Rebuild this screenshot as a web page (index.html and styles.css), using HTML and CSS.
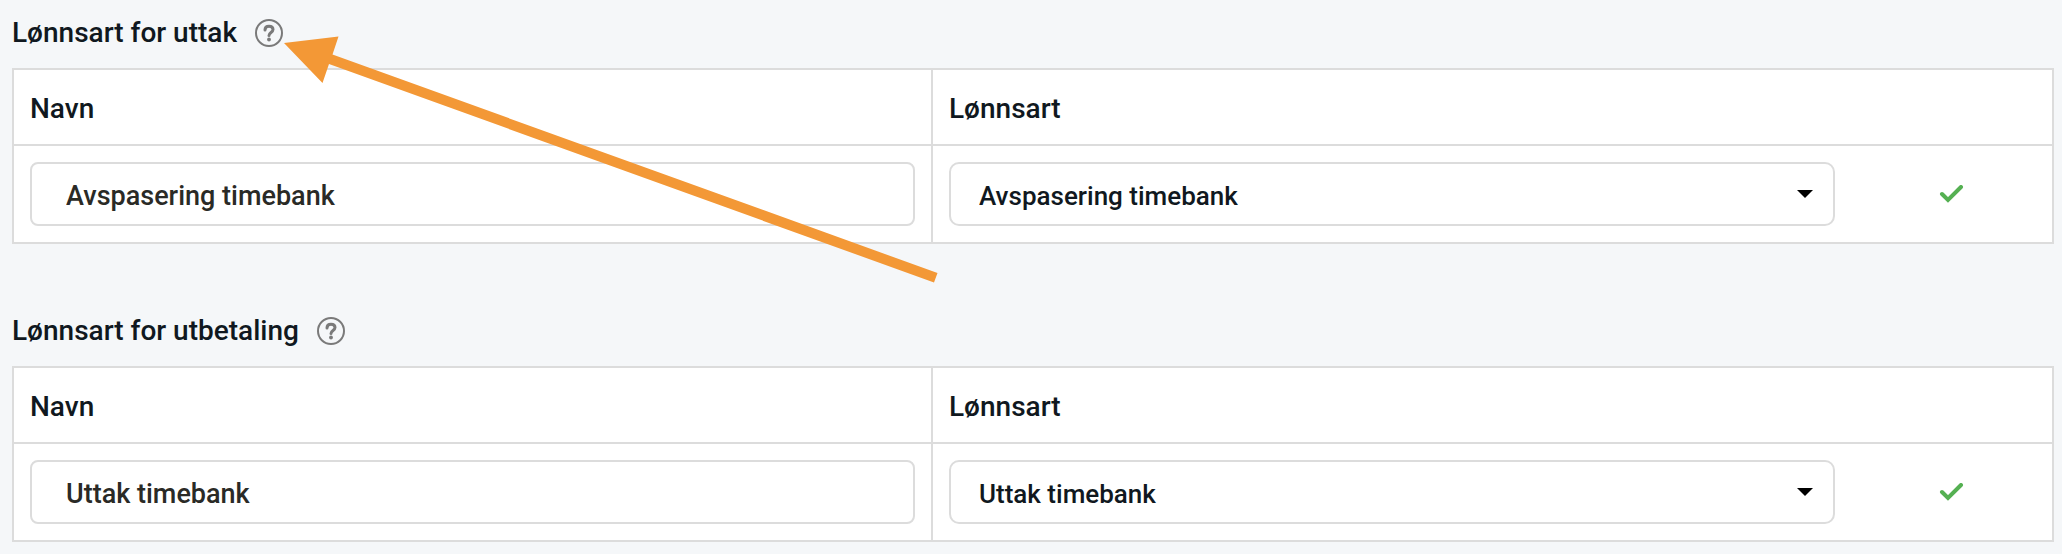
FILE: index.html
```html
<!DOCTYPE html>
<html lang="no">
<head>
    <meta charset="UTF-8">
    <meta name="viewport" content="width=device-width, initial-scale=1.0">
    <title>Timebank</title>
    <link rel="stylesheet" href="styles.css">
</head>
<body>
    <section>
        <div class="heading">
            <h2>Lønnsart for uttak</h2>
            <button type="button" class="help" aria-label="Hjelp">
                <svg width="28" height="28" viewBox="0 0 28 28">
                    <circle cx="14" cy="14" r="13"/>
                    <path d="M10 11C10 8.600 11.700 7.200 14 7.200C16.300 7.200 18 8.500 18 10.600C18 13.500 14 13.500 14 16.500"/>
                    <circle class="dot" cx="14" cy="20.500" r="1.900"/>
                </svg>
            </button>
        </div>
        <table>
            <thead>
                <tr>
                    <th>Navn</th>
                    <th>Lønnsart</th>
                    <th class="status"></th>
                </tr>
            </thead>
            <tbody>
                <tr>
                    <td><input type="text" aria-label="Navn" value="Avspasering timebank"></td>
                    <td>
                        <div class="select">
                            <select aria-label="Lønnsart">
                                <option>Avspasering timebank</option>
                                <option>Uttak timebank</option>
                            </select>
                            <svg class="caret" width="16" height="8" viewBox="0 0 16 8"><path d="M0 0H16L8 8Z"/></svg>
                        </div>
                    </td>
                    <td class="status">
                        <svg class="check" width="26" height="18" viewBox="0 0 26 18"><path d="M3 9L9 15L22 2"/></svg>
                    </td>
                </tr>
            </tbody>
        </table>
    </section>

    <section>
        <div class="heading">
            <h2>Lønnsart for utbetaling</h2>
            <button type="button" class="help" aria-label="Hjelp">
                <svg width="28" height="28" viewBox="0 0 28 28">
                    <circle cx="14" cy="14" r="13"/>
                    <path d="M10 11C10 8.600 11.700 7.200 14 7.200C16.300 7.200 18 8.500 18 10.600C18 13.500 14 13.500 14 16.500"/>
                    <circle class="dot" cx="14" cy="20.500" r="1.900"/>
                </svg>
            </button>
        </div>
        <table>
            <thead>
                <tr>
                    <th>Navn</th>
                    <th>Lønnsart</th>
                    <th class="status"></th>
                </tr>
            </thead>
            <tbody>
                <tr>
                    <td><input type="text" aria-label="Navn" value="Uttak timebank"></td>
                    <td>
                        <div class="select">
                            <select aria-label="Lønnsart">
                                <option>Uttak timebank</option>
                                <option>Avspasering timebank</option>
                            </select>
                            <svg class="caret" width="16" height="8" viewBox="0 0 16 8"><path d="M0 0H16L8 8Z"/></svg>
                        </div>
                    </td>
                    <td class="status">
                        <svg class="check" width="26" height="18" viewBox="0 0 26 18"><path d="M3 9L9 15L22 2"/></svg>
                    </td>
                </tr>
            </tbody>
        </table>
    </section>

    <!-- arrow pointing at the first help icon -->
    <svg class="arrow" width="656" height="248" viewBox="0 0 656 248">
        <path d="M0 7L54.500 0.500L48.500 18.500L653.500 237L650 246.500L45 28L38.500 47Z"/>
    </svg>
</body>
</html>
```

FILE: styles.css
```css
* {
    box-sizing: border-box;
}

body {
    position: relative;
    margin: 0;
    padding: 12px 8px 12px 12px;
    background-color: #f5f7f9;
    color: #101820;
    font-family: Roboto, Arial, sans-serif;
    font-size: 28px;
    font-weight: 500;
    line-height: 42px;
}

section + section {
    margin-top: 66px;
}

.heading {
    display: flex;
    align-items: center;
    gap: 18px;
    margin-bottom: 14px;
}

h2 {
    margin: 0;
    font-size: 28px;
    font-weight: 500;
}

.help {
    display: flex;
    padding: 0;
    border: none;
    background: none;
    cursor: pointer;
}

.help svg {
    fill: none;
    stroke: #7a7a7a;
    stroke-width: 2;
    stroke-linecap: round;
}

.help path {
    stroke-width: 3;
}

.help .dot {
    fill: #7a7a7a;
    stroke: none;
}

table {
    width: 100%;
    table-layout: fixed;
    border-collapse: collapse;
    background-color: #fff;
    border: 2px solid #dcdcdc;
}

th, td {
    padding: 16px;
    border-bottom: 2px solid #dcdcdc;
    text-align: left;
    font-weight: 500;
}

th {
    padding: 18px 16px 14px;
}

th:first-child, td:first-child {
    border-right: 2px solid #dcdcdc;
}

.status {
    width: 202px;
}

input,
select {
    display: block;
    width: 100%;
    height: 64px;
    border: 2px solid #dcdcdc;
    border-radius: 8px;
    background-color: #fff;
    font-family: inherit;
    font-weight: 500;
}

input {
    padding: 3px 34px 0;
    color: #2a2a26;
    font-size: 27px;
}

.select {
    position: relative;
}

select {
    appearance: none;
    padding: 3px 28px 0;
    border-radius: 10px;
    color: #101820;
    font-size: 26px;
}

.caret {
    position: absolute;
    top: 28px;
    right: 22px;
    pointer-events: none;
}

.check {
    display: block;
    margin: 0 auto;
    fill: none;
    stroke: #55b052;
    stroke-width: 4;
    stroke-linecap: round;
}

.arrow {
    position: absolute;
    top: 36px;
    left: 284px;
    fill: #f39836;
    pointer-events: none;
}
```
